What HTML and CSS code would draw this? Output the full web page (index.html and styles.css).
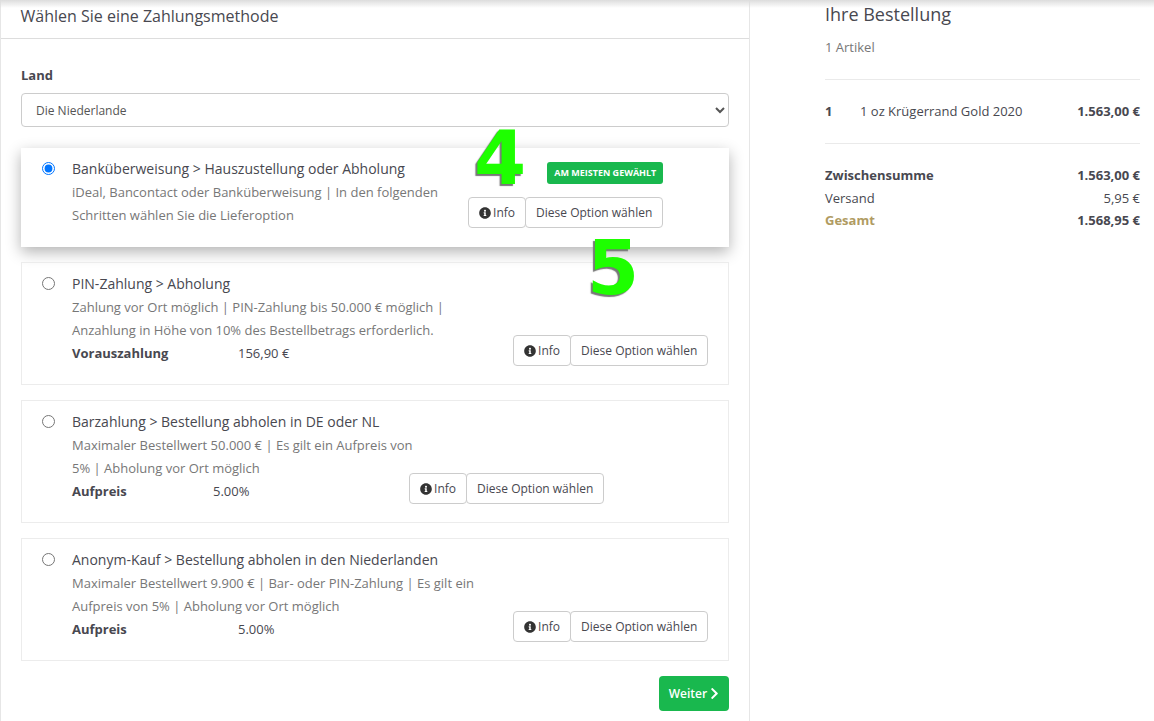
FILE: index.html
```html
<!DOCTYPE html>
<html lang="de">
<head>
    <meta charset="UTF-8">
    <title>Zahlungsmethode</title>
    <link rel="stylesheet" href="styles.css">
</head>
<body>
    <svg class="icon-defs" width="0" height="0">
        <symbol id="info" viewBox="0 0 512 512"><path d="M256 8C119.043 8 8 119.083 8 256c0 136.997 111.043 248 248 248s248-111.003 248-248C504 119.083 392.957 8 256 8zm0 110c23.196 0 42 18.804 42 42s-18.804 42-42 42-42-18.804-42-42 18.804-42 42-42zm56 254c0 6.627-5.373 12-12 12h-88c-6.627 0-12-5.373-12-12v-24c0-6.627 5.373-12 12-12h12v-64h-12c-6.627 0-12-5.373-12-12v-24c0-6.627 5.373-12 12-12h64c6.627 0 12 5.373 12 12v100h12c6.627 0 12 5.373 12 12v24z"/></symbol>
    </svg>

    <div class="page">
        <div class="checkout">
            <h2 class="checkout-title">Wählen Sie eine Zahlungsmethode</h2>
            <div class="checkout-body">
                <label class="field-label">Land</label>
                <select class="country">
                    <option>Die Niederlande</option>
                </select>

                <div class="card card-active">
                    <input class="card-radio" type="radio" name="pay" checked>
                    <div class="card-text text-bank">
                        <div class="card-title">Banküberweisung &gt; Hauszustellung oder Abholung</div>
                        <div class="card-desc">iDeal, Bancontact oder Banküberweisung | In den folgenden<br>Schritten wählen Sie die Lieferoption</div>
                    </div>
                    <div class="card-actions">
                        <span class="badge">AM MEISTEN GEWÄHLT</span>
                        <div class="btn-group">
                            <button class="btn"><svg class="info-icon"><use href="#info"/></svg> Info</button>
                            <button class="btn">Diese Option wählen</button>
                        </div>
                    </div>
                </div>

                <div class="card">
                    <input class="card-radio" type="radio" name="pay">
                    <div class="card-text text-wide">
                        <div class="card-title">PIN-Zahlung &gt; Abholung</div>
                        <div class="card-desc">Zahlung vor Ort möglich | PIN-Zahlung bis 50.000 € möglich |<br>Anzahlung in Höhe von 10% des Bestellbetrags erforderlich.</div>
                        <div class="card-fee"><strong class="fee-long">Vorauszahlung</strong><span>156,90 €</span></div>
                    </div>
                    <div class="card-actions">
                        <div class="btn-group">
                            <button class="btn"><svg class="info-icon"><use href="#info"/></svg> Info</button>
                            <button class="btn">Diese Option wählen</button>
                        </div>
                    </div>
                </div>

                <div class="card">
                    <input class="card-radio" type="radio" name="pay">
                    <div class="card-text text-narrow">
                        <div class="card-title">Barzahlung &gt; Bestellung abholen in DE oder NL</div>
                        <div class="card-desc">Maximaler Bestellwert 50.000 € | Es gilt ein Aufpreis von<br>5% | Abholung vor Ort möglich</div>
                        <div class="card-fee"><strong class="fee-short">Aufpreis</strong><span>5.00%</span></div>
                    </div>
                    <div class="card-actions">
                        <div class="btn-group">
                            <button class="btn"><svg class="info-icon"><use href="#info"/></svg> Info</button>
                            <button class="btn">Diese Option wählen</button>
                        </div>
                    </div>
                </div>

                <div class="card">
                    <input class="card-radio" type="radio" name="pay">
                    <div class="card-text text-wide">
                        <div class="card-title">Anonym-Kauf &gt; Bestellung abholen in den Niederlanden</div>
                        <div class="card-desc">Maximaler Bestellwert 9.900 € | Bar- oder PIN-Zahlung | Es gilt ein<br>Aufpreis von 5% | Abholung vor Ort möglich</div>
                        <div class="card-fee"><strong class="fee-long">Aufpreis</strong><span>5.00%</span></div>
                    </div>
                    <div class="card-actions">
                        <div class="btn-group">
                            <button class="btn"><svg class="info-icon"><use href="#info"/></svg> Info</button>
                            <button class="btn">Diese Option wählen</button>
                        </div>
                    </div>
                </div>

                <div class="next-row">
                    <button class="btn-next">Weiter <svg class="next-icon" viewBox="0 0 320 512"><path d="M285.476 272.971L91.132 467.314c-9.373 9.373-24.569 9.373-33.941 0l-22.667-22.667c-9.357-9.357-9.375-24.522-.04-33.901L188.505 256 34.484 101.255c-9.335-9.379-9.317-24.544.04-33.901l22.667-22.667c9.373-9.373 24.569-9.373 33.941 0L285.475 239.03c9.373 9.372 9.373 24.568.001 33.941z"/></svg></button>
                </div>
            </div>

            <!-- hand drawn step numbers on the screenshot -->
            <span class="step step-4">4</span>
            <span class="step step-5">5</span>
        </div>

        <aside class="summary">
            <h2 class="summary-title">Ihre Bestellung</h2>
            <div class="summary-count">1 Artikel</div>
            <div class="summary-item">
                <strong class="item-qty">1</strong>
                <span class="item-name">1 oz Krügerrand Gold 2020</span>
                <strong>1.563,00 €</strong>
            </div>
            <div class="summary-totals">
                <div class="total-row"><strong>Zwischensumme</strong><strong>1.563,00 €</strong></div>
                <div class="total-row"><span>Versand</span><span>5,95 €</span></div>
                <div class="total-row"><strong class="total-label">Gesamt</strong><strong>1.568,95 €</strong></div>
            </div>
        </aside>
    </div>
    <div class="top-shadow"></div>
</body>
</html>
```

FILE: styles.css
```css
/* --- Page --- */
body {
    margin: 0;
    height: 100vh;
    overflow: hidden;
    background: #fff;
    color: #484850;
    font-family: "Open Sans", sans-serif;
    font-size: 13px;
}
.icon-defs { position: absolute; }
.page { display: flex; height: 100%; }
.top-shadow {
    position: fixed;
    top: 0; left: 0; right: 0;
    height: 8px;
    background: linear-gradient(#dcdcdc, rgba(255,255,255,0));
    pointer-events: none;
}

/* --- Left column --- */
.checkout {
    position: relative;
    box-sizing: border-box;
    width: 750px;
    border-left: 1px solid #e6e6e6;
    border-right: 1px solid #e6e6e6;
}
.checkout-title {
    margin: 0;
    height: 39px;
    padding: 5px 0 0 19.5px;
    box-sizing: border-box;
    border-bottom: 1px solid #ddd;
    font-size: 16px;
    font-weight: 400;
    line-height: 22px;
    color: #484850;
}
.checkout-body { padding: 0 20px; }
.field-label {
    display: block;
    margin-top: 26px;
    font-size: 13px;
    font-weight: 700;
    line-height: 20px;
}
.country {
    display: block;
    width: 100%;
    height: 34px;
    margin-top: 8px;
    padding: 0 10px;
    background: #fff;
    border: 1px solid #ccc;
    border-radius: 4px;
    color: #555;
    font-family: "Open Sans", sans-serif;
    font-size: 12px;
}

/* --- Payment cards --- */
.card {
    display: flex;
    box-sizing: border-box;
    height: 123px;
    margin-top: 15px;
    padding: 9px 20px 18px 0;
    border: 1px solid #ececec;
}
.card-active {
    height: 99px;
    margin-top: 21px;
    padding-top: 8px;
    border-color: #fff;
    box-shadow: 0 5px 14px rgba(0,0,0,0.3);
}
.card-radio {
    flex: none;
    width: 13px;
    height: 13px;
    margin: 5px 17px 0 20px;
}
.card-text { flex: none; white-space: nowrap; line-height: 23.5px; }
.text-bank { width: 396px; }
.text-wide { width: 441px; }
.text-narrow { width: 337px; }
.card-title { font-size: 14px; color: #484850; }
.card-desc { color: #777; }
.card-fee { display: flex; margin-top: -1px; }
.card-fee strong { color: #484850; }
.fee-long { width: 166px; }
.fee-short { width: 141px; }

.card-actions {
    display: flex;
    flex-direction: column;
    justify-content: flex-end;
    align-items: flex-end;
}
.badge {
    margin-bottom: 13px;
    padding: 0 7px;
    height: 22px;
    background: #19b84e;
    border-radius: 3px;
    color: #fff;
    font-size: 9px;
    font-weight: 700;
    line-height: 22px;
}
.btn-group { display: flex; }
.btn {
    height: 31px;
    padding: 0 10px;
    background: #fff;
    border: 1px solid #ccc;
    border-radius: 4px;
    color: #484850;
    font-family: "Open Sans", sans-serif;
    font-size: 12px;
    white-space: nowrap;
}
.btn + .btn { margin-left: -1px; }
.info-icon { width: 12px; height: 12px; margin-right: -1px; fill: #333; vertical-align: -2px; }

.next-row { display: flex; justify-content: flex-end; margin-top: 15px; }
.btn-next {
    height: 35px;
    width: 70px;
    padding: 0;
    background: #19b84e;
    border: none;
    border-radius: 4px;
    color: #fff;
    font-family: "Open Sans", sans-serif;
    font-size: 12px;
    font-weight: 600;
}
.next-icon { width: 9px; height: 13px; fill: #fff; vertical-align: -2px; }

/* --- Step numbers --- */
.step {
    position: absolute;
    color: #1eff00;
    font-family: "DejaVu Sans", sans-serif;
    font-size: 75px;
    font-weight: 700;
    line-height: 75px;
    text-shadow: -2px 2px 1px #777;
}
.step-4 { left: 473px; top: 121px; }
.step-5 { left: 586px; top: 231px; }

/* --- Order summary --- */
.summary {
    box-sizing: border-box;
    width: 404px;
    padding: 0 14px 0 75px;
}
.summary-title {
    margin: 0;
    padding-top: 1px;
    font-size: 18px;
    font-weight: 400;
    line-height: 26px;
    color: #484850;
}
.summary-count {
    margin-top: 10px;
    padding-bottom: 22px;
    border-bottom: 1px solid #eaeaea;
    color: #777;
    line-height: 20px;
}
.summary-item {
    display: flex;
    height: 61px;
    padding-bottom: 2px;
    align-items: center;
    border-bottom: 1px solid #eaeaea;
    box-sizing: content-box;
}
.item-qty { width: 35px; }
.item-name { flex: 1; }
.summary-totals { padding-top: 20px; }
.total-row {
    display: flex;
    justify-content: space-between;
    line-height: 22.5px;
}
.total-label { color: #b09b62; }
```
